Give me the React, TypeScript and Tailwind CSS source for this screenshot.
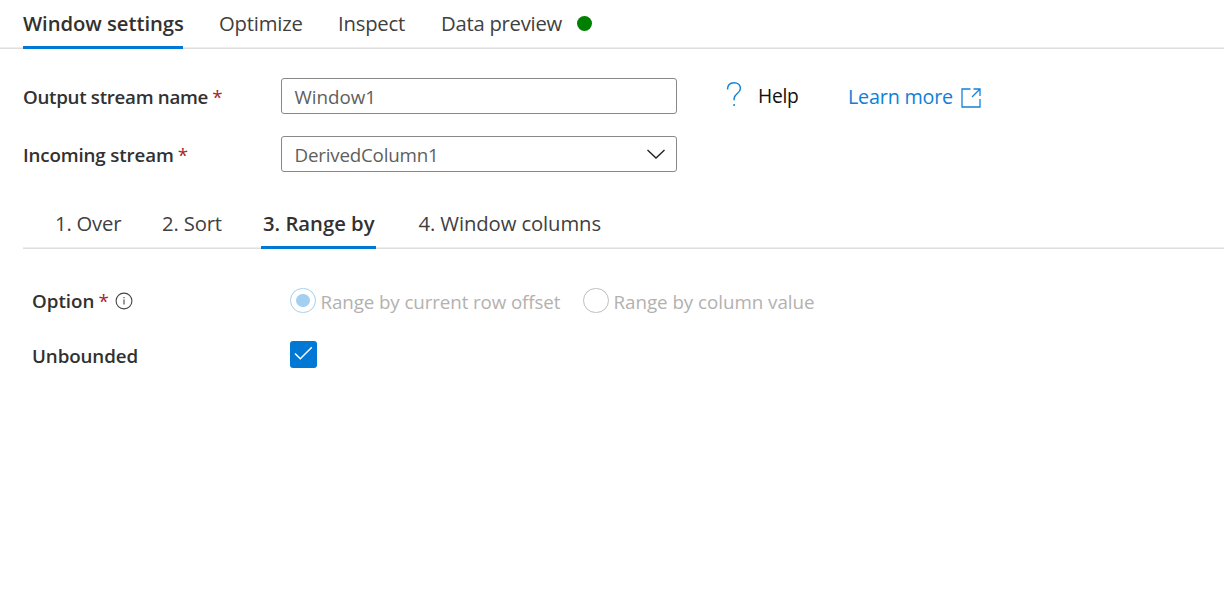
import type { ReactNode } from "react";

function Tab({ active, className, children }: { active?: boolean; className: string; children: ReactNode }) {
  return (
    <div
      role="tab"
      aria-selected={!!active}
      className={`flex h-full items-center whitespace-nowrap border-b-[3px] text-[20.25px] ${
        active ? "border-[#0078d4] font-[580] text-[#323130]" : "border-transparent text-[#404040]"
      } ${className}`}
    >
      {children}
    </div>
  );
}

function Label({ className, required, children }: { className: string; required?: boolean; children: ReactNode }) {
  return (
    <div className={`flex items-center whitespace-nowrap text-[18.75px] font-[580] text-[#323130] ${className}`}>
      {children}
      {required && <span className="ml-[4px] font-medium text-[#a4262c]">*</span>}
    </div>
  );
}

function InfoIcon() {
  return (
    <svg width="18" height="18" viewBox="0 0 18 18" fill="none" stroke="#484644" strokeWidth="1.1">
      <circle cx="9" cy="9" r="7.9" />
      <path d="M9 7.5v5M9 5v1.3" />
    </svg>
  );
}

function Radio({ checked }: { checked?: boolean }) {
  return (
    <span
      className={`flex h-[25px] w-[26px] shrink-0 items-center justify-center rounded-full border ${
        checked ? "border-[#a3d0f0]" : "border-[#c0bfbe]"
      }`}
    >
      {checked && <span className="h-[13px] w-[14px] rounded-full bg-[#a3cff0]" />}
    </span>
  );
}

export default function App() {
  return (
    <div className="h-[606px] w-[1224px] overflow-hidden bg-white font-['Open_Sans',sans-serif] leading-none">
      <div role="tablist" className="flex h-[49px] bg-[linear-gradient(to_top,#dedede_1px,#ededed_1px,#ededed_2px,transparent_2px)] pl-[23px]">
        <Tab active className="w-[160px] tracking-[-0.05px]">Window settings</Tab>
        <Tab className="ml-[36px] w-[84px] tracking-[-0.2px]">Optimize</Tab>
        <Tab className="ml-[35px] w-[68px] tracking-[-0.2px]">Inspect</Tab>
        <Tab className="ml-[35px] w-[151px] tracking-[-0.25px]">
          <span className="w-[123px]">Data preview</span>
          <span className="ml-[13px] size-[15px] shrink-0 rounded-full bg-[#008000]" />
        </Tab>
      </div>

      <div className="mt-[29px] flex h-9 items-center pl-[23px]">
        <Label required className="w-[258px] pt-[3px] tracking-[-0.3px]">Output stream name</Label>
        <div className="flex h-9 w-[396px] items-center rounded-[3px] border border-[#8a8886] pl-[12.5px] pt-[3px] text-[18.75px] text-[#605e5c]">
          Window1
        </div>
        <svg className="-mt-[4px] ml-[49px]" width="17" height="26" viewBox="0 0 17 26" fill="none" stroke="#1583d8" strokeWidth="1.5">
          <path d="M1.5 8.500C1.500 4.200 4.100 1.700 8 1.700s6.400 2.400 6.400 5.800c0 5-6.300 5-6.300 10.100v1.700M8.100 22.900v2.100" />
        </svg>
        <span className="-mt-px ml-[15px] w-[41px] text-[19.25px] tracking-[-0.3px] text-[#111111]">Help</span>
        <a className="ml-[49px] flex items-center pt-[2px] text-[19.75px] tracking-[-0.2px] text-[#0f7fd6]">
          <span className="w-[106px]">Learn more</span>
          <svg className="ml-[7px] mt-px" width="20" height="20" viewBox="0 0 20 20" fill="none" stroke="#1583d8" strokeWidth="1.3">
            <path d="M9.500 1H1v18h18v-8M12.500 1H19v7M19 1l-8 8" />
          </svg>
        </a>
      </div>

      <div className="mt-[22px] flex h-9 items-center pl-[23px]">
        <Label required className="w-[258px] pt-[3px] tracking-[-0.15px]">Incoming stream</Label>
        <div className="flex h-9 w-[396px] items-center justify-between rounded-[3px] border border-[#8a8886] pl-[12.5px] pr-[10px] text-[18.75px] tracking-[-0.2px] text-[#605e5c]">
          <span className="pt-[3px]">DerivedColumn1</span>
          <svg width="20" height="12" viewBox="0 0 20 12" fill="none" stroke="#201f1e" strokeWidth="1.3">
            <path d="M1.5 2 10 10l8.500-8" />
          </svg>
        </div>
      </div>

      <div role="tablist" className="ml-[23px] mt-[28px] flex h-[49px] bg-[linear-gradient(to_top,#dedede_1px,#ededed_1px,#ededed_2px,transparent_2px)] pl-[32px]">
        <Tab className="w-[67px] tracking-[-0.2px]">1. Over</Tab>
        <Tab className="ml-[40px] w-[61px] tracking-[-0.15px]">2. Sort</Tab>
        <Tab active className="ml-[38px] w-[115px] pl-[2px]">3. Range by</Tab>
        <Tab className="ml-[42.5px] w-[186px] tracking-[-0.1px]">4. Window columns</Tab>
      </div>

      <div className="mt-[39px] flex h-[26px] items-center pl-8">
        <Label required className="w-[258px] pt-px">
          Option
        </Label>
        <div className="-ml-[175px] -mt-px mr-[157px]">
          <InfoIcon />
        </div>
        <div className="-mt-px flex items-center text-[18.75px] text-[#b3b1af]">
          <Radio checked />
          <span className="ml-[4.5px] w-[240.5px] whitespace-nowrap pt-[4px] tracking-[-0.1px]">Range by current row offset</span>
          <span className="ml-[22px] flex">
            <Radio />
          </span>
          <span className="ml-[4.5px] whitespace-nowrap pt-[4px] tracking-[-0.03px]">Range by column value</span>
        </div>
      </div>

      <div className="mt-[27px] flex h-[27px] items-center pl-8">
        <Label className="w-[258px] pt-[3px] tracking-[-0.1px]">Unbounded</Label>
        <div className="flex size-[27px] items-center justify-center rounded-[3px] bg-[#0078d4] pb-[2px]">
          <svg width="19" height="15" viewBox="0 0 19 15" fill="none" stroke="#ffffff" strokeWidth="1.5">
            <path d="M1 7.500 6.300 12.800 17.800 1.300" />
          </svg>
        </div>
      </div>
    </div>
  );
}
